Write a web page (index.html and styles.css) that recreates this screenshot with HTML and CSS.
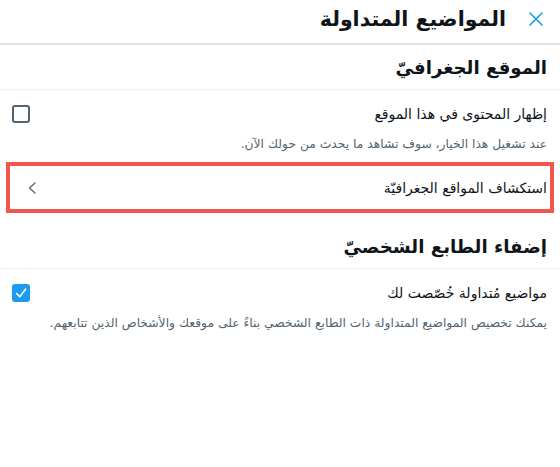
FILE: index.html
```html
<!DOCTYPE html>
<html lang="ar" dir="rtl">
<head>
<meta charset="utf-8">
<link rel="stylesheet" href="styles.css">
</head>
<body>
<header class="topbar">
  <button class="close" aria-label="إغلاق">
    <svg viewBox="0 0 14 14" width="14" height="14"><path d="M1 1 L13 13 M13 1 L1 13" stroke="#1d9bf0" stroke-width="1.6" fill="none" stroke-linecap="round"/></svg>
  </button>
  <h1 class="title">المواضيع المتداولة</h1>
</header>

<section class="section">
  <h2 class="section-title">الموقع الجغرافيّ</h2>
  <div class="option">
    <span class="option-label">إظهار المحتوى في هذا الموقع</span>
    <span class="checkbox"></span>
  </div>
  <p class="desc">عند تشغيل هذا الخيار، سوف تشاهد ما يحدث من حولك الآن.</p>
  <div class="link-row">
    <span class="link-label">استكشاف المواقع الجغرافيّة</span>
    <svg class="chev" viewBox="0 0 8 12" width="8" height="12"><path d="M7 1 L1.5 6 L7 11" stroke="#536471" stroke-width="1.3" fill="none" stroke-linecap="round" stroke-linejoin="round"/></svg>
  </div>
</section>

<section class="section">
  <h2 class="section-title">إضفاء الطابع الشخصيّ</h2>
  <div class="option">
    <span class="option-label">مواضيع مُتداولة خُصّصت لك</span>
    <span class="checkbox checked">
      <svg viewBox="0 0 18 18" width="18" height="18"><path d="M4.5 9.5 L7.8 12.8 L13.5 5.2" stroke="#fff" stroke-width="1.6" fill="none" stroke-linecap="round" stroke-linejoin="round"/></svg>
    </span>
  </div>
  <p class="desc">يمكنك تخصيص المواضيع المتداولة ذات الطابع الشخصي بناءً على موقعك والأشخاص الذين تتابعهم.</p>
</section>
</body>
</html>
```

FILE: styles.css
```css
* { box-sizing: border-box; }
html, body { margin: 0; padding: 0; background: #fff; }
body {
  font-family: "DejaVu Sans", "Noto Sans", sans-serif;
  color: #0f1419;
  width: 560px;
}
.topbar {
  display: flex;
  align-items: center;
  height: 45px;
  padding: 0 17px 5px 13px;
  border-bottom: 2px solid #e2e2e2;
  gap: 23px;
}
.close {
  border: 0;
  background: none;
  padding: 0;
  width: 14px;
  height: 14px;
  display: flex;
}
.title {
  margin: 0;
  font-size: 20.5px;
  font-weight: bold;
  line-height: 26px;
}
.section-title {
  margin: 0;
  height: 45px;
  display: flex;
  align-items: center;
  padding: 0 13px;
  font-size: 18.2px;
  font-weight: bold;
  border-bottom: 1px solid #efefef;
}
.option {
  display: flex;
  align-items: center;
  justify-content: space-between;
  height: 46px;
  padding: 2px 13px 0 12px;
}
.option-label { font-size: 14px; }
.checkbox {
  width: 18px;
  height: 18px;
  border: 2px solid #536471;
  border-radius: 3px;
  display: flex;
}
.checkbox.checked {
  background: #1d9bf0;
  border: 0;
}
.desc {
  margin: 0;
  padding: 0 13px 10px;
  font-size: 12.3px;
  line-height: 16px;
  color: #536471;
}
.link-row {
  display: flex;
  align-items: center;
  justify-content: space-between;
  margin: 0 6px 11px;
  height: 51px;
  border: 4px solid #f1564d;
  padding: 0 3px 0 18px;
}
.link-label { font-size: 14px; }
.chev { display: block; }
```
